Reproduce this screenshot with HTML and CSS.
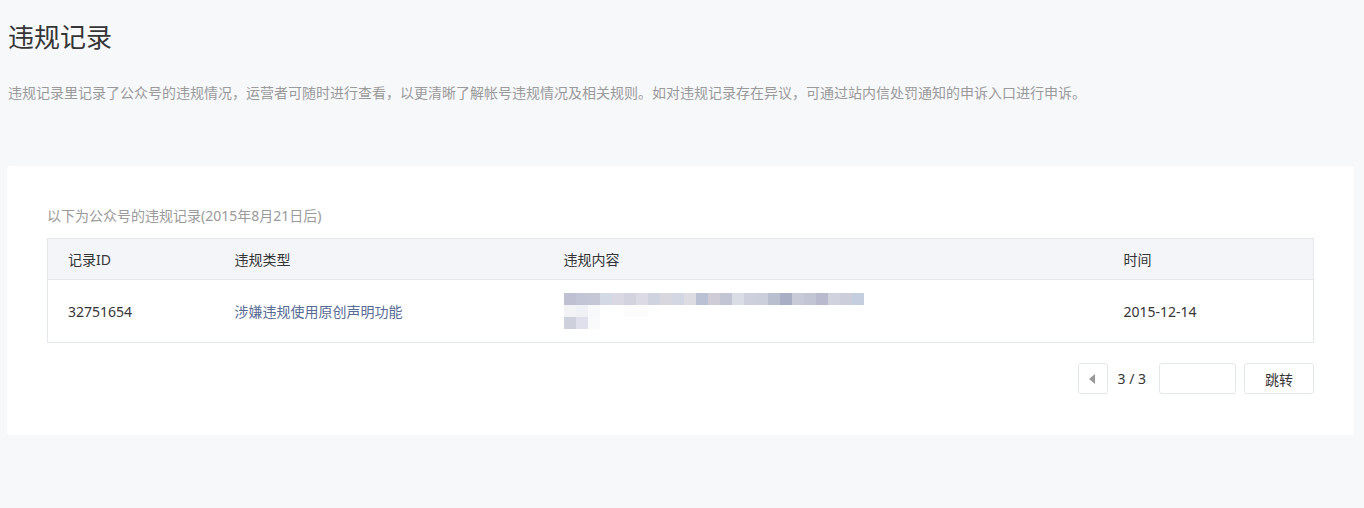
FILE: index.html
```html
<!DOCTYPE html>
<html lang="zh-CN">
<head>
  <meta charset="UTF-8" />
  <title>违规记录</title>
  <link rel="stylesheet" href="styles.css">
</head>
<body>
  <div class="page">
    <h1 class="title">违规记录</h1>
    <p class="desc">违规记录里记录了公众号的违规情况，运营者可随时进行查看，以更清晰了解帐号违规情况及相关规则。如对违规记录存在异议，可通过站内信处罚通知的申诉入口进行申诉。</p>

    <div class="card">
      <p class="caption">以下为公众号的违规记录(2015年8月21日后)</p>
      <table class="records">
        <colgroup>
          <col class="c-id"><col class="c-type"><col class="c-content"><col>
        </colgroup>
        <thead>
          <tr><th>记录ID</th><th>违规类型</th><th>违规内容</th><th>时间</th></tr>
        </thead>
        <tbody>
          <tr>
            <td>32751654</td>
            <td class="type">涉嫌违规使用原创声明功能</td>
            <td><div id="mosaic" class="mosaic"></div></td>
            <td>2015-12-14</td>
          </tr>
        </tbody>
      </table>

      <div class="pager">
        <button class="prev"><span class="arrow"></span></button>
        <span class="count">3 / 3</span>
        <input class="jump-input" type="text" />
        <button class="jump">跳转</button>
      </div>
    </div>
  </div>

  <script>
    // blurred content, 12px blocks
    const rows = [
      ["#bfc1d2","#c2c5d6","#c5c7d6","#d3d9e5","#d9d8e3","#d3d3e0","#dcdae5","#cfd3df","#d8d7e0","#d2d7e3","#dcdce2","#bbc1d4","#cfccd7","#c2c5d3","#dbdde6","#cfd0dd","#cbcedb","#babfd0","#a8aec4","#c9cad7","#c2c5d4","#b9bacd","#d0d2de","#cdcedb","#c4cede"],
      ["#f3f3f5","#f0f1f4","#f8f9fb","#fff","#fff","#fcfcfd","#fcfcfd"],
      ["#ced1db","#e0e0ec","#fafafc"]
    ];
    const box = document.getElementById("mosaic");
    rows.forEach(r => {
      const line = document.createElement("div");
      line.className = "mosaic-row";
      r.forEach(c => {
        const b = document.createElement("span");
        b.style.background = c;
        line.appendChild(b);
      });
      box.appendChild(line);
    });
  </script>
</body>
</html>
```

FILE: styles.css
```css
body {
  margin: 0; background: #f7f8fa; color: #353535;
  font-family: "Noto Sans", "Noto Sans CJK SC", sans-serif;
}
.page { padding: 0 10px 40px 7px; }
.title {
  margin: 19px 0 0 1px; font-size: 26px; line-height: 36px; font-weight: normal;
}
.desc {
  margin: 28px 0 0 1px; font-size: 14px; line-height: 20px; color: #9a9a9a;
}
.card {
  margin-top: 63px; background: #fff; border-radius: 3px;
  padding: 40px 40px 41px 40px;
}
.caption {
  margin: 0 0 12px; font-size: 14px; line-height: 20px; color: #9a9a9a;
}
.records {
  width: 100%; border-collapse: collapse; table-layout: fixed;
  border: 1px solid #e4e8eb; font-size: 14px;
}
.c-id { width: 167px; }
.c-type { width: 329px; }
.c-content { width: 560px; }
.records th {
  background: #f4f5f9; font-weight: normal; text-align: left;
  height: 40px; padding: 0 20px; border-bottom: 1px solid #e4e8eb;
}
.records td { height: 62px; padding: 0 20px; }
.records .type { color: #576b95; }
.mosaic { display: flex; flex-direction: column; }
.mosaic-row { display: flex; height: 12px; }
.mosaic-row span { width: 12px; height: 12px; }
.pager {
  margin-top: 20px; display: flex; justify-content: flex-end; align-items: center;
  font-size: 14px;
}
.prev, .jump-input, .jump {
  box-sizing: border-box; height: 31px; border: 1px solid #e4e8eb;
  border-radius: 3px; background: #fff; font-family: inherit;
}
.prev {
  width: 30px; padding: 0; display: flex; align-items: center; justify-content: center;
}
.arrow {
  width: 0; height: 0; border-style: solid; border-width: 5px 6px 5px 0;
  border-color: transparent #999 transparent transparent; margin-left: -2px;
}
.count { margin: 0 13px 0 9px; }
.jump-input { width: 77px; padding: 0 8px; }
.jump {
  width: 70px; margin-left: 8px; font-size: 14px; color: #353535;
}
```
